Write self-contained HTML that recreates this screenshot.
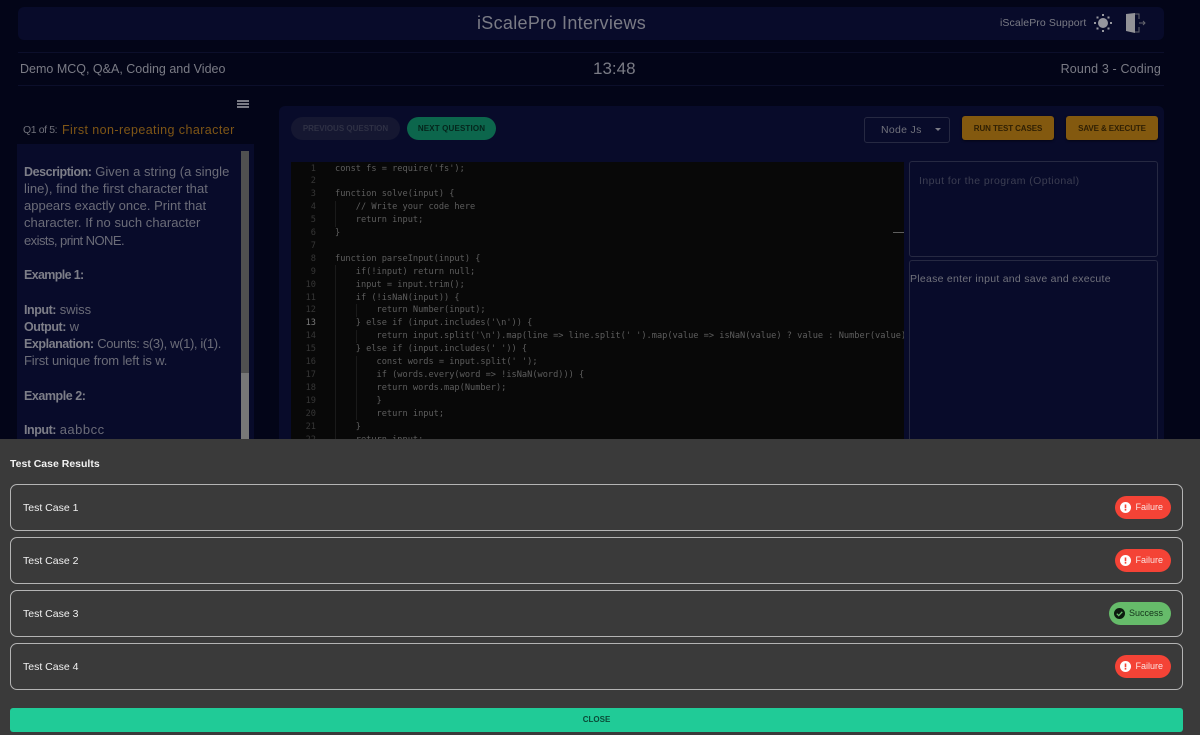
<!DOCTYPE html>
<html><head><meta charset="utf-8"><style>
html,body{margin:0;padding:0}
body{width:1200px;height:735px;overflow:hidden;position:relative;background:#030518;font-family:"Liberation Sans",sans-serif}
.a{position:absolute;white-space:nowrap}
.t{color:#7a7b85;font-size:12.5px;letter-spacing:0}
.desc{position:absolute;left:24px;font-size:13px;letter-spacing:.05px;color:#6b6c78;white-space:nowrap;line-height:17px}
.desc b{color:#7d7e88;font-weight:bold;font-size:12.5px;letter-spacing:-.45px}
.code{position:absolute;left:291px;top:162px;width:613px;height:277px;background:#080808;overflow:hidden;font-family:"DejaVu Sans Mono",monospace;font-size:8.64px;line-height:12.9px;color:#5e5e5e}
.code pre{position:absolute;left:44px;top:.5px;margin:0;font:inherit;white-space:pre}
.nums{position:absolute;left:0;top:.5px;width:25px;text-align:right;color:#363636}
.guide{position:absolute;width:1px;background:#1a1a1a}
.box{position:absolute;left:10px;width:1171px;height:45px;border:1px solid #b4b4b4;border-radius:7px}
.box span{position:absolute;left:12px;top:16px;font-size:10.5px;letter-spacing:0;color:#f1f1f1;line-height:14px}
.pill{position:absolute;right:11px;top:11px;height:23px;border-radius:12px;font-size:9px;letter-spacing:0;line-height:23px}
.fail{width:56px;background:#f44336;color:#fbe3e1}
.ok{width:62px;background:#66bb6a;color:#13331a}
.pill svg{position:absolute;top:6px;left:4.5px}
.pill i{position:absolute;right:8px;top:0;font-style:normal}
.btn{position:absolute;top:116px;height:24px;border-radius:3px;background:#83590f;color:#302004;font-size:8px;font-weight:bold;letter-spacing:-.1px;text-align:center;line-height:25px;box-shadow:0 1px 2px rgba(0,0,0,.5)}
</style></head><body>

<div class="a" style="left:18px;top:7px;width:1146px;height:33px;background:#080b2a;border-radius:6px"></div>
<div class="a" style="left:477px;top:13px;font-size:18px;letter-spacing:.3px;color:#7a7b85;line-height:21px">iScalePro Interviews</div>
<div class="a t" style="left:1000px;top:16px;font-size:10.5px;letter-spacing:.1px;line-height:14px">iScalePro Support</div>

<svg class="a" style="left:1092px;top:12px" width="22" height="22" viewBox="0 0 22 22"><circle cx="11" cy="11" r="5" fill="#96979e"/><g fill="#96979e"><rect x="10" y="2" width="2" height="2"/><rect x="10" y="18" width="2" height="2"/><rect x="2" y="10" width="2" height="2"/><rect x="18" y="10" width="2" height="2"/><rect x="4.500" y="4.500" width="2" height="2"/><rect x="15.500" y="4.500" width="2" height="2"/><rect x="4.500" y="15.500" width="2" height="2"/><rect x="15.500" y="15.500" width="2" height="2"/></g></svg>
<svg class="a" style="left:1125px;top:12px" width="22" height="23" viewBox="0 0 22 23"><path d="M1 2 L10 1 V21 L1 19Z" fill="#929297"/><path d="M10 2H14V7M14 15V20H10M14 11H20M18 9L20 11L18 13" fill="none" stroke="#64656e" stroke-width="1"/></svg>

<div class="a" style="left:18px;top:52px;width:1146px;height:1px;background:#0c0f2b"></div>
<div class="a" style="left:18px;top:85px;width:1146px;height:1px;background:#0c0f2b"></div>
<div class="a t" style="left:20px;top:61px;font-size:12.5px;line-height:16px">Demo MCQ, Q&amp;A, Coding and Video</div>
<div class="a" style="left:593px;top:58px;font-size:17px;letter-spacing:0;color:#7a7b85;line-height:22px">13:48</div>
<div class="a t" style="right:39px;top:61px;font-size:12.5px;letter-spacing:.15px;line-height:16px">Round 3 - Coding</div>

<div class="a" style="left:237px;top:100px;width:12px;height:2px;background:#7a7b85;box-shadow:0 3px 0 #7a7b85,0 6px 0 #7a7b85"></div>
<div class="a" style="left:23px;top:123px;font-size:10.5px;letter-spacing:-.4px;color:#70717b;line-height:14px">Q1 of 5:</div>
<div class="a" style="left:62px;top:122px;font-size:12.500px;letter-spacing:.42px;color:#7f5616;line-height:16px">First non-repeating character</div>

<div class="a" style="left:17px;top:144px;width:237px;height:295px;background:#080b2a;overflow:hidden">
<div class="a" style="left:224px;top:7px;width:8px;height:222px;background:#505050"></div>
<div class="a" style="left:224px;top:229px;width:8px;height:66px;background:#777"></div>
</div>
<div class="desc" style="top:163px"><b>Description:</b> Given a string (a single</div>
<div class="desc" style="top:180px">line), find the first character that</div>
<div class="desc" style="top:197px;letter-spacing:0">appears exactly once. Print that</div>
<div class="desc" style="top:214px">character. If no such character</div>
<div class="desc" style="top:232px;letter-spacing:-.55px">exists, print NONE.</div>
<div class="desc" style="top:266px"><b style="letter-spacing:-.65px">Example 1:</b></div>
<div class="desc" style="top:301px"><b>Input:</b> <span style="letter-spacing:-.1px">swiss</span></div>
<div class="desc" style="top:318px"><b>Output:</b> w</div>
<div class="desc" style="top:335px"><b>Explanation:</b> <span style="letter-spacing:-.37px">Counts: s(3), w(1), i(1).</span></div>
<div class="desc" style="top:352px;letter-spacing:-.15px">First unique from left is w.</div>
<div class="desc" style="top:387px"><b>Example 2:</b></div>
<div class="desc" style="top:421px"><b>Input:</b> <span style="letter-spacing:.5px">aabbcc</span></div>

<div class="a" style="left:279px;top:106px;width:885px;height:333px;background:#080b2a;border-radius:6px 6px 0 0"></div>
<div class="a" style="left:291px;top:117px;width:109px;height:23px;border-radius:12px;background:#151731;color:#2f3145;font-size:8px;font-weight:bold;letter-spacing:0;text-align:center;line-height:23px">PREVIOUS QUESTION</div>
<div class="a" style="left:407px;top:117px;width:89px;height:23px;border-radius:12px;background:#0c664c;color:#05251c;font-size:8px;font-weight:bold;letter-spacing:.15px;text-align:center;line-height:23px">NEXT QUESTION</div>

<div class="a" style="left:864px;top:117px;width:84px;height:24px;border:1px solid #262942;border-radius:3px"></div>
<div class="a" style="left:881px;top:123px;font-size:10.5px;letter-spacing:.3px;color:#70717b;line-height:14px">Node Js</div>
<div class="a" style="left:935px;top:128px;width:0;height:0;border-left:3.500px solid transparent;border-right:3.500px solid transparent;border-top:3.500px solid #7a7b85"></div>
<div class="btn" style="left:962px;width:92px">RUN TEST CASES</div>
<div class="btn" style="left:1066px;width:92px">SAVE &amp; EXECUTE</div>

<div class="code">
<div class="nums">1<br>2<br>3<br>4<br>5<br>6<br>7<br>8<br>9<br>10<br>11<br>12<br><span style="color:#7a7a7a">13</span><br>14<br>15<br>16<br>17<br>18<br>19<br>20<br>21<br>22</div>
<div class="guide" style="left:44px;top:39px;height:26px"></div>
<div class="guide" style="left:44px;top:103px;height:180px"></div>
<div class="guide" style="left:65px;top:142px;height:13px"></div>
<div class="guide" style="left:65px;top:168px;height:13px"></div>
<div class="guide" style="left:65px;top:194px;height:64px"></div>
<pre>const fs = require('fs');

function solve(input) {
    // Write your code here
    return input;
}

function parseInput(input) {
    if(!input) return null;
    input = input.trim();
    if (!isNaN(input)) {
        return Number(input);
    } else if (input.includes('\n')) {
        return input.split('\n').map(line =&gt; line.split(' ').map(value =&gt; isNaN(value) ? value : Number(value)
    } else if (input.includes(' ')) {
        const words = input.split(' ');
        if (words.every(word =&gt; !isNaN(word))) {
        return words.map(Number);
        }
        return input;
    }
    return input;</pre>
<div class="a" style="left:602px;top:70px;width:11px;height:1px;background:#5e5e5e"></div>
</div>

<div class="a" style="left:909px;top:161px;width:247px;height:94px;border:1px solid #262942;border-radius:3px"></div>
<div class="a" style="left:919px;top:174px;font-size:10.5px;letter-spacing:.42px;color:#3c3e52;line-height:14px">Input for the program (Optional)</div>
<div class="a" style="left:909px;top:260px;width:247px;height:190px;border:1px solid #262942;border-radius:3px"></div>
<div class="a" style="left:910px;top:272px;font-size:10.5px;letter-spacing:.27px;color:#70717b;line-height:14px">Please enter input and save and execute</div>

<div class="a" style="left:0;top:439px;width:1200px;height:296px;background:#3a3a3a"></div>
<div class="a" style="left:10px;top:457px;font-size:10.5px;font-weight:bold;letter-spacing:0;color:#f2f2f2;line-height:14px">Test Case Results</div>

<div class="box" style="top:484px"><span>Test Case 1</span><div class="pill fail"><svg width="11" height="11" viewBox="0 0 11 11"><circle cx="5.500" cy="5.500" r="5.500" fill="#fff"/><rect x="4.700" y="2.500" width="1.600" height="3.800" fill="#f44336"/><rect x="4.700" y="7" width="1.600" height="1.600" fill="#f44336"/></svg><i>Failure</i></div></div>
<div class="box" style="top:537px"><span>Test Case 2</span><div class="pill fail"><svg width="11" height="11" viewBox="0 0 11 11"><circle cx="5.500" cy="5.500" r="5.500" fill="#fff"/><rect x="4.700" y="2.500" width="1.600" height="3.800" fill="#f44336"/><rect x="4.700" y="7" width="1.600" height="1.600" fill="#f44336"/></svg><i>Failure</i></div></div>
<div class="box" style="top:590px"><span>Test Case 3</span><div class="pill ok"><svg width="11" height="11" viewBox="0 0 11 11"><circle cx="5.500" cy="5.500" r="5.500" fill="#0c1a0e"/><path d="M2.800 5.700L4.700 7.600L8.300 3.800" fill="none" stroke="#66bb6a" stroke-width="1.300"/></svg><i>Success</i></div></div>
<div class="box" style="top:643px"><span>Test Case 4</span><div class="pill fail"><svg width="11" height="11" viewBox="0 0 11 11"><circle cx="5.500" cy="5.500" r="5.500" fill="#fff"/><rect x="4.700" y="2.500" width="1.600" height="3.800" fill="#f44336"/><rect x="4.700" y="7" width="1.600" height="1.600" fill="#f44336"/></svg><i>Failure</i></div></div>

<div class="a" style="left:10px;top:708px;width:1173px;height:24px;background:#20cb97;border-radius:3px;color:#0b4a37;font-size:8px;font-weight:bold;letter-spacing:0;text-align:center;line-height:24px">CLOSE</div>
</body></html>
